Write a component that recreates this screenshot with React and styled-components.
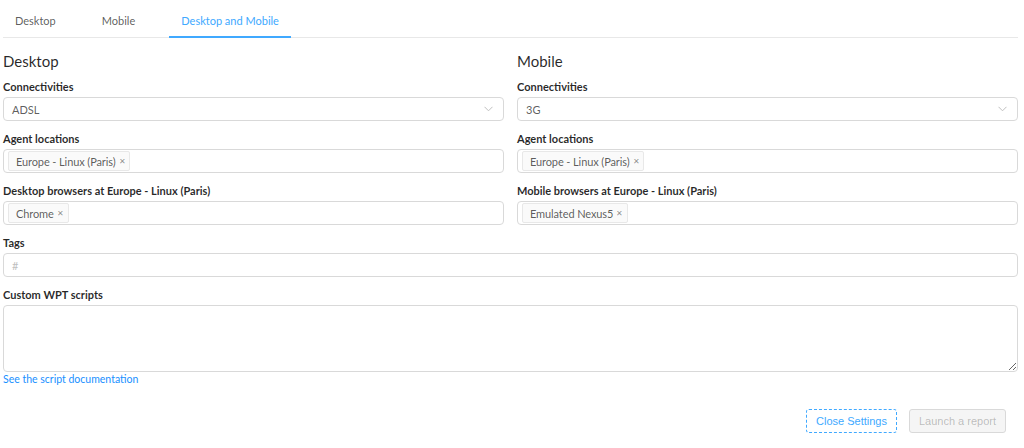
import React from 'react';
import styled, { createGlobalStyle } from 'styled-components';

const GlobalStyle = createGlobalStyle`
  body {
    margin: 0;
    background: #fff;
    font-family: Lato, 'Liberation Sans', sans-serif;
    font-size: 11px;
    color: rgba(0, 0, 0, 0.65);
  }
`;

const Page = styled.div`
  padding: 0 6px 0 3px;
`;

const TabBar = styled.div`
  display: flex;
  border-bottom: 1px solid #e8e8e8;
`;

const Tab = styled.div`
  padding: 12px 12px 6px;
  margin-right: 22px;
  line-height: 18px;
  font-size: 11px;
  color: ${p => (p.active ? '#40a9ff' : 'rgba(0,0,0,0.65)')};
  border-bottom: 2px solid ${p => (p.active ? '#40a9ff' : 'transparent')};
  margin-bottom: -1px;
  cursor: pointer;
`;

const Columns = styled.div`
  display: grid;
  grid-template-columns: 1fr 1fr;
  column-gap: 13px;
  margin-top: 11px;
`;

const Heading = styled.h3`
  margin: 0 0 6px;
  font-size: 15px;
  font-weight: 400;
  line-height: 24px;
  color: rgba(0, 0, 0, 0.85);
`;

const Field = styled.div`
  margin-bottom: 10px;
`;

const Label = styled.div`
  font-weight: 700;
  font-size: 11px;
  line-height: 16px;
  margin-bottom: 2px;
  color: rgba(0, 0, 0, 0.85);
`;

const Box = styled.div`
  box-sizing: border-box;
  height: 24px;
  border: 1px solid #d9d9d9;
  border-radius: 4px;
  background: #fff;
  display: flex;
  align-items: center;
  padding: 0 10px 0 ${p => (p.chips ? '4px' : '8px')};
  color: ${p => (p.placeholder ? '#bfbfbf' : 'rgba(0,0,0,0.65)')};
  font-size: 11px;
`;

const Value = styled.span`
  flex: 1;
`;

const Chip = styled.span`
  display: inline-flex;
  align-items: center;
  height: 20px;
  box-sizing: border-box;
  padding: 0 4px 0 7px;
  margin-right: 4px;
  background: #fafafa;
  border: 1px solid #e8e8e8;
  border-radius: 2px;
  font-size: 11px;
  letter-spacing: -0.1px;
  color: rgba(0, 0, 0, 0.65);
`;

const ChipClose = styled.span`
  margin-left: 3px;
  font-size: 8px;
  color: rgba(0, 0, 0, 0.45);
`;

const TextArea = styled.textarea`
  display: block;
  box-sizing: border-box;
  width: 100%;
  height: 67px;
  margin: 1px 0 0;
  border: 1px solid #d9d9d9;
  border-radius: 4px;
  font-family: inherit;
`;

const DocLink = styled.a`
  display: block;
  line-height: 14px;
  font-size: 10.5px;
  color: #1890ff;
  text-decoration: none;
`;

const Actions = styled.div`
  display: flex;
  justify-content: flex-end;
  gap: 12px;
  margin: 23px 12px 0 0;
`;

const Button = styled.button`
  box-sizing: border-box;
  height: 24px;
  padding: 0 9px;
  border-radius: 3px;
  font-family: 'Liberation Sans', Arial, sans-serif;
  font-size: 11px;
  border: 1px ${p => (p.dashed ? 'dashed #40a9ff' : 'solid #d9d9d9')};
  color: ${p => (p.disabled ? 'rgba(0,0,0,0.25)' : '#40a9ff')};
  background: ${p => (p.disabled ? '#f5f5f5' : '#fff')};
`;

const Chevron = () => (
  <svg width="9" height="6" viewBox="0 0 9 6" fill="none">
    <path d="M0.5 0.8 L4.5 4.8 L8.5 0.8" stroke="#bfbfbf" strokeWidth="1" />
  </svg>
);

function SelectBox({ value }) {
  return (
    <Box>
      <Value>{value}</Value>
      <Chevron />
    </Box>
  );
}

function ChipBox({ items }) {
  return (
    <Box chips>
      {items.map(item => (
        <Chip key={item}>
          {item}
          <ChipClose>✕</ChipClose>
        </Chip>
      ))}
    </Box>
  );
}

function Column({ title, connectivity, browsersLabel, browser }) {
  return (
    <div>
      <Heading>{title}</Heading>
      <Field>
        <Label>Connectivities</Label>
        <SelectBox value={connectivity} />
      </Field>
      <Field>
        <Label>Agent locations</Label>
        <ChipBox items={['Europe - Linux (Paris)']} />
      </Field>
      <Field>
        <Label>{browsersLabel}</Label>
        <ChipBox items={[browser]} />
      </Field>
    </div>
  );
}

export default function App() {
  return (
    <Page>
      <GlobalStyle />
      <TabBar>
        <Tab>Desktop</Tab>
        <Tab>Mobile</Tab>
        <Tab active>Desktop and Mobile</Tab>
      </TabBar>
      <Columns>
        <Column
          title="Desktop"
          connectivity="ADSL"
          browsersLabel="Desktop browsers at Europe - Linux (Paris)"
          browser="Chrome"
        />
        <Column
          title="Mobile"
          connectivity="3G"
          browsersLabel="Mobile browsers at Europe - Linux (Paris)"
          browser="Emulated Nexus5"
        />
      </Columns>
      <Field>
        <Label>Tags</Label>
        <Box placeholder>#</Box>
      </Field>
      <div>
        <Label>Custom WPT scripts</Label>
        <TextArea />
        <DocLink href="#">See the script documentation</DocLink>
      </div>
      <Actions>
        <Button dashed>Close Settings</Button>
        <Button disabled>Launch a report</Button>
      </Actions>
    </Page>
  );
}
